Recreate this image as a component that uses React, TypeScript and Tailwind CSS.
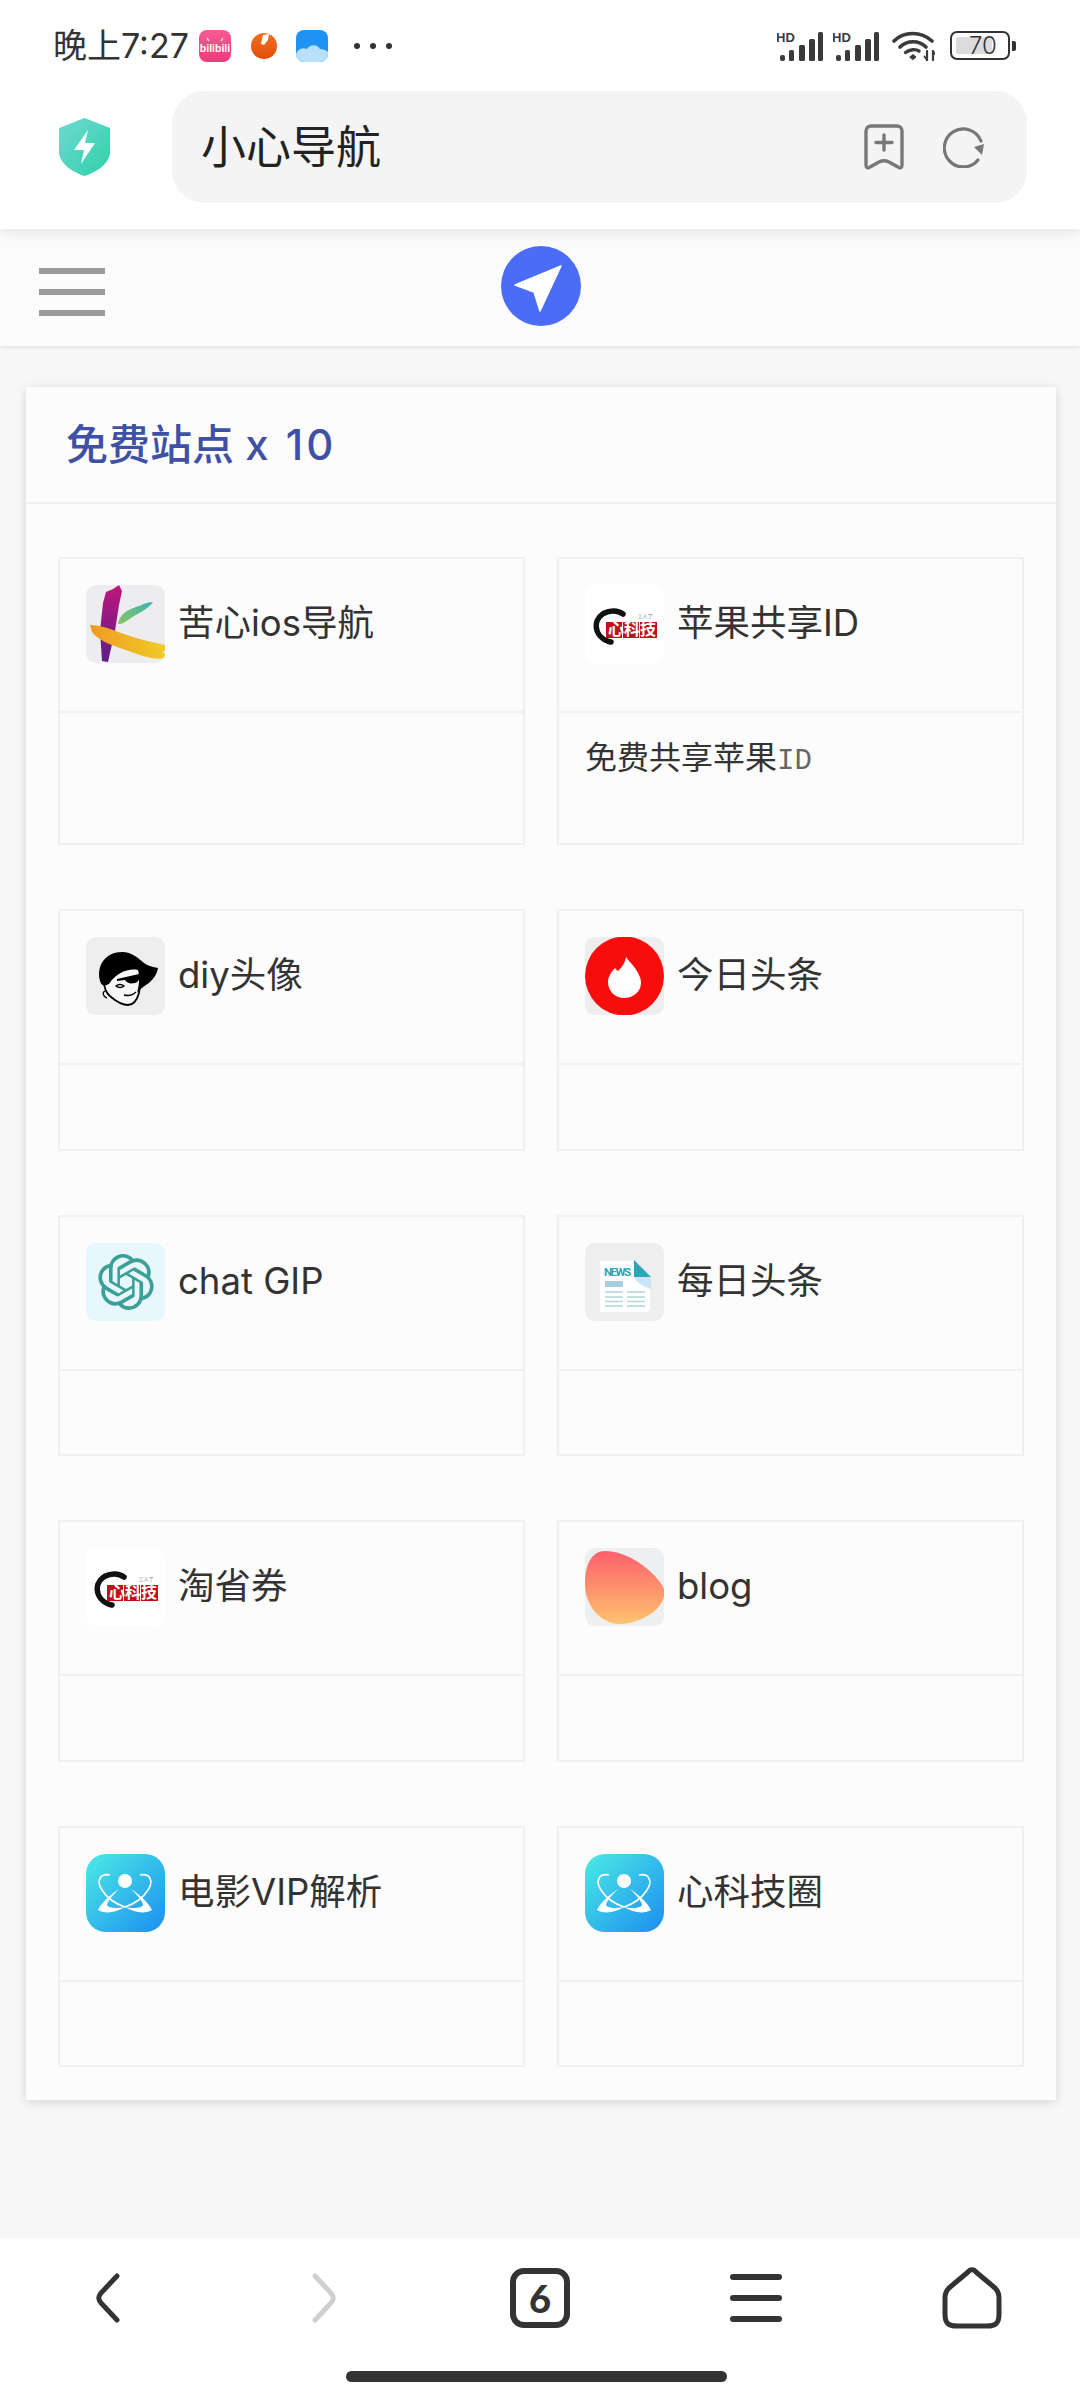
import React from 'react';
import { SiOpenai } from 'react-icons/si';

const SignalIcon = () => (
  <svg width="46" height="30" viewBox="0 0 46 30">
    <text x="-1" y="11" fontFamily="Liberation Sans" fontWeight="700" fontSize="13" fill="#3a3a3a">HD</text>
    <rect x="3" y="24" width="5" height="6" rx="2" fill="#3a3a3a" />
    <rect x="12" y="19" width="5" height="11" rx="1.5" fill="#3a3a3a" />
    <rect x="22" y="14" width="6" height="16" rx="1.5" fill="#3a3a3a" />
    <rect x="32" y="8" width="6" height="22" rx="1.5" fill="#3a3a3a" />
    <rect x="41" y="1" width="5" height="29" rx="1.5" fill="#3a3a3a" />
  </svg>
);

const WifiIcon = () => (
  <svg width="43" height="31" viewBox="0 0 43 31" fill="none" stroke="#3a3a3a" strokeLinecap="round">
    <path d="M2 11C12 1 29 1 40 11" strokeWidth="3.6" />
    <path d="M8 17C15 10 27 10 34 17" strokeWidth="3.6" />
    <path d="M13.5 22.5C18 19 24 19 27 21" strokeWidth="3.4" />
    <path d="M18 27l3-2.5 3 2.5-3 2.5z" fill="#3a3a3a" strokeWidth="1" />
    <path d="M35 21v9M41 21v9" strokeWidth="2.2" />
    <path d="M32.5 26.5L35 30M43 24l-2-3" strokeWidth="1.8" />
  </svg>
);

const Battery = () => (
  <div className="flex items-center gap-[2px]">
    <div className="relative flex h-[29px] w-[60px] items-center justify-center rounded-[7px] border-[2.5px] border-[#333333] p-[3px]">
      <div className="absolute top-[4px] bottom-[4px] left-[4px] w-[36px] rounded-[2px] bg-[#dcdcdc]" />
      <span className="relative pl-[6px] text-[24px] leading-none font-light text-[#333333]">70</span>
    </div>
    <div className="h-[10px] w-[4px] rounded-r-[2px] bg-[#333333]" />
  </div>
);

const BiliIcon = () => (
  <svg width="32" height="32" viewBox="0 0 32 32">
    <defs>
      <linearGradient id="bili" x1="0" y1="0" x2="0" y2="1">
        <stop offset="0" stopColor="#f65c92" />
        <stop offset="1" stopColor="#f0397c" />
      </linearGradient>
    </defs>
    <rect width="32" height="32" rx="8" fill="url(#bili)" />
    <path d="M8 8l2 3M24 8l-2 3" stroke="#fbc3d8" strokeWidth="1.5" />
    <text x="16" y="22" textAnchor="middle" fontFamily="Liberation Sans" fontWeight="700" fontSize="10.500" fill="#fff">bilibili</text>
  </svg>
);

const PenIcon = () => (
  <svg width="26" height="26" viewBox="0 0 26 26">
    <defs>
      <linearGradient id="pen" x1="0" y1="0" x2="0" y2="1">
        <stop offset="0" stopColor="#f07020" />
        <stop offset="1" stopColor="#e24c0a" />
      </linearGradient>
    </defs>
    <circle cx="13" cy="13" r="13" fill="url(#pen)" />
    <path d="M12 2l6-1-1 6-4 5-3-1z" fill="#fff" />
  </svg>
);

const CloudIcon = () => (
  <svg width="32" height="32" viewBox="0 0 32 32">
    <rect width="32" height="32" rx="8" fill="#1f93f5" />
    <path d="M0 24c2-5 6-7 11-5 3-5 10-5 13 0 3 0 6 1 8 3v2a8 8 0 0 1-8 8H8a8 8 0 0 1-8-8z" fill="#b9e0fb" />
  </svg>
);

const ShieldIcon = () => (
  <svg width="51" height="58" viewBox="0 0 51 58">
    <defs>
      <linearGradient id="shield" x1="0" y1="0" x2="1" y2="1">
        <stop offset="0" stopColor="#6fd9d4" />
        <stop offset="1" stopColor="#2fd0a6" />
      </linearGradient>
    </defs>
    <path d="M25.5 0L51 10v24c0 11-13 20-25.500 24C13 54 0 45 0 34V10z" fill="url(#shield)" />
    <path d="M29 12L15 32h10l-3 14 14-21H26z" fill="#fff" />
  </svg>
);

const BookmarkIcon = () => (
  <svg width="40" height="46" viewBox="0 0 40 46" fill="none" stroke="#777777" strokeWidth="3.4" strokeLinecap="round" strokeLinejoin="round">
    <path d="M7 2h26a5 5 0 0 1 5 5v34c0 3-2 3.500-4 2l-9-5c-3-1.500-7-1.500-10 0l-9 5c-2 1.500-4 1-4-2V7a5 5 0 0 1 5-5z" />
    <path d="M20 11v15M12 18.500h16" />
  </svg>
);

const ReloadIcon = () => (
  <svg width="42" height="42" viewBox="0 0 42 42" fill="none">
    <path d="M38 15A19 19 0 1 0 35 34" stroke="#777777" strokeWidth="3.2" strokeLinecap="round" />
    <path d="M41 18L39 29 31 21z" fill="#777777" />
  </svg>
);

const SendIcon = () => (
  <svg width="80" height="80" viewBox="0 0 80 80">
    <circle cx="40" cy="40" r="40" fill="#4a6cf7" />
    <path d="M60 20L14 39l19 7 6 19z" fill="#fff" stroke="#fff" strokeWidth="1.500" strokeLinejoin="round" />
  </svg>
);

const KIcon = () => (
  <svg width="79" height="78" viewBox="0 0 79 78">
    <defs>
      <linearGradient id="kv" x1="0" y1="0" x2="0" y2="1">
        <stop offset="0" stopColor="#c0167a" />
        <stop offset="1" stopColor="#5b1e8c" />
      </linearGradient>
      <linearGradient id="kg" x1="0" y1="1" x2="1" y2="0">
        <stop offset="0" stopColor="#8cc660" />
        <stop offset="1" stopColor="#38b5b0" />
      </linearGradient>
      <linearGradient id="ky" x1="0" y1="0" x2="1" y2="0">
        <stop offset="0" stopColor="#ef9a22" />
        <stop offset="1" stopColor="#f0cb28" />
      </linearGradient>
    </defs>
    <rect width="79" height="78" rx="9" fill="#ededf0" />
    <path d="M33 0l3 6-3 14-4 26-7 31-6-1-2-30 3-28 3-11 7-3z" fill="url(#kv)" />
    <path d="M32 39c1-9 9-14 18-17 6-2 11-5 17-5-4 6-12 10-19 14-5 3-11 9-16 8z" fill="url(#kg)" />
    <path d="M4 40c10 0 21 4 31 8 13 5 30 9 44 12v6l-3 1 3 2v4c-9 2-20-1-31-5C33 62 14 58 6 47z" fill="url(#ky)" />
  </svg>
);

const XinkejiIcon = () => (
  <svg width="79" height="78" viewBox="0 0 79 78" className="bg-[#ffffff]">
    <path d="M38 29C30 23 16 26 12 36c-3 9 3 19 14 21" fill="none" stroke="#111111" strokeWidth="5.500" strokeLinecap="round" strokeDasharray="20 1.500 14 1" />
    <rect x="21" y="37" width="16" height="16" fill="#c2101a" />
    <rect x="38" y="37" width="16" height="16" fill="#c2101a" />
    <rect x="55" y="37" width="17" height="16" fill="#c2101a" />
    <text x="47" y="50" textAnchor="middle" fontFamily="Noto Sans CJK SC" fontWeight="700" fontSize="16" fill="#ffffff">心科技</text>
    <text x="60" y="33" textAnchor="middle" fontFamily="Noto Sans CJK SC" fontSize="5" fill="#777777">工人了</text>
  </svg>
);

const AvatarIcon = () => (
  <svg width="79" height="78" viewBox="0 0 79 78">
    <rect width="79" height="78" rx="9" fill="#eeeeee" />
    <path d="M18 44c0 8 3 13 7 16 6 5 12 8 17 8 6 0 9-5 11-12l2-14V30H25z" fill="#f8f8f8" stroke="#000" strokeWidth="1.800" />
    <path d="M14 44C10 28 20 15 36 15c10 0 16 6 22 11 4 3 9 4 14 5-1 7-6 13-12 17-4 3-7 5-9 8 2-7 3-16 1-23-10-2-22 3-29 14-4 2-7 3-9-3z" fill="#000" />
    <path d="M31 42l22-5c1 4 0 8-4 9-5 1-8 0-10-3l-8 1z" fill="#000" />
    <path d="M30 49c2-2 6-2 8 0-2 2-6 2-8 0zM38 58c4 1 9 0 12-3M19 54c-3 1-2 6 2 7" fill="none" stroke="#000" strokeWidth="1.300" />
  </svg>
);

const FlameIcon = () => (
  <svg width="79" height="78" viewBox="0 0 79 78">
    <rect width="79" height="78" rx="9" fill="#eeeeee" />
    <circle cx="39.500" cy="39" r="39.500" fill="#f80d0d" />
    <path d="M41 20c-1 6-4 10-8 14-2-1-2-2-3-3-4 4-7 9-7 14 0 9 7 16 16 16 10 0 17-7 17-15 0-6-3-10-6-15-3-4-7-8-9-11z" fill="#fff" />
  </svg>
);

const GptIcon = () => (
  <div className="flex h-[78px] w-[79px] items-center justify-center rounded-[9px] bg-[#e8f7fd]">
    <SiOpenai className="h-[56px] w-[56px] text-[#3b9f97]" />
  </div>
);

const NewsIcon = () => (
  <svg width="79" height="78" viewBox="0 0 79 78">
    <rect width="79" height="78" rx="9" fill="#eeeeee" />
    <path d="M15 18h33l17 17v30a4 4 0 0 1-4 4H15z" fill="#ffffff" />
    <path d="M49 17l17 17H49z" fill="#2aa7b8" />
    <path d="M49 34h17v12c-7-2-14-6-17-12z" fill="#c8e6f7" />
    <text x="19" y="33" fontFamily="Roboto" fontWeight="700" fontSize="11.500" fill="#2aa7b8" textLength="27">NEWS</text>
    <rect x="20" y="38" width="18" height="6" fill="#a6cde0" />
    <path d="M20 49h18M42 49h18M20 54h18M42 54h18M20 58.500h18M42 58.500h18M20 63h18M42 63h18" stroke="#b3d4d8" strokeWidth="1.300" />
  </svg>
);

const BlobIcon = () => (
  <svg width="79" height="78" viewBox="0 0 79 78">
    <defs>
      <linearGradient id="blob" x1="0" y1="0" x2="0" y2="1">
        <stop offset="0" stopColor="#fd5f6c" />
        <stop offset="1" stopColor="#fec36f" />
      </linearGradient>
    </defs>
    <rect width="79" height="78" rx="9" fill="#eeeff1" />
    <path d="M20 3c17 0 35 10 49 24 7 8 12 13 10 21-2 14-24 28-44 28C16 76 0 58 0 36 0 16 7 3 20 3z" fill="url(#blob)" />
  </svg>
);

const AtomIcon = ({ id }: { id: string }) => {
  const orbit = (
    <>
      <path d="M12 56C16 48 24 41 33 35 26 42 21 48 21 51 22 54 30 55 39 53 30 59 18 60 12 56z" fill="#fff" />
      <path d="M24 21C14 19 10 27 16 36 21 44 30 50 39 53" fill="none" stroke="#fff" strokeWidth="1.600" />
    </>
  );
  return (
    <svg width="79" height="78" viewBox="0 0 79 78">
      <defs>
        <linearGradient id={id} x1="0" y1="0" x2="1" y2="1">
          <stop offset="0" stopColor="#4beae4" />
          <stop offset="1" stopColor="#1c8ff0" />
        </linearGradient>
      </defs>
      <rect width="79" height="78" rx="20" fill={`url(#${id})`} />
      <circle cx="39" cy="27" r="7" fill="#fff" />
      {orbit}
      <g transform="translate(78 0) scale(-1 1)">{orbit}</g>
    </svg>
  );
};

interface Site {
  name: string;
  desc?: string;
  icon: React.ReactNode;
}

const sites: Site[] = [
  { name: '苦心ios导航', icon: <KIcon /> },
  { name: '苹果共享ID', desc: '免费共享苹果', icon: <XinkejiIcon /> },
  { name: 'diy头像', icon: <AvatarIcon /> },
  { name: '今日头条', icon: <FlameIcon /> },
  { name: 'chat GIP', icon: <GptIcon /> },
  { name: '每日头条', icon: <NewsIcon /> },
  { name: '淘省券', icon: <XinkejiIcon /> },
  { name: 'blog', icon: <BlobIcon /> },
  { name: '电影VIP解析', icon: <AtomIcon id="atom1" /> },
  { name: '心科技圈', icon: <AtomIcon id="atom2" /> },
];

const SiteCard = ({ site }: { site: Site }) => (
  <div className="flex flex-col border-2 border-[#f0f0f0]">
    <div className="flex h-[154px] items-start gap-[13px] border-b-2 border-[#f0f0f0] pt-[26px] pl-[26px]">
      <div className="h-[78px] w-[79px] shrink-0 overflow-hidden rounded-[9px]">{site.icon}</div>
      <span className="text-[36.5px] leading-[76px] text-[#333333]">{site.name}</span>
    </div>
    <div className="min-h-[83.5px] flex-1 pl-[26px]">
      {site.desc && (
        <p className="h-[130px] pt-[26px] text-[32px] leading-[38px] text-[#333333]">
          {site.desc}
          <span className="font-['Liberation_Mono',monospace] text-[29px] leading-none font-light text-[#666666]">ID</span>
        </p>
      )}
    </div>
  </div>
);

export default function App() {
  return (
    <div className="flex min-h-[2400px] flex-col bg-[#f7f7f7] font-['Inter','Noto_Sans_CJK_SC',sans-serif]">
      <div className="relative z-10 h-[229px] bg-white shadow-[0_3px_12px_rgba(0,0,0,0.1)]">
        <div className="flex h-[91px] items-center pr-[64px] pl-[53px]">
          <span className="text-[34px] leading-none text-[#333333]">晚上7:27</span>
          <div className="ml-[10px] flex items-center">
            <BiliIcon />
            <div className="ml-[20px]"><PenIcon /></div>
            <div className="ml-[19px]"><CloudIcon /></div>
            <div className="ml-[26px] flex gap-[10px]">
              <span className="h-[6px] w-[6px] rounded-full bg-[#333333]" />
              <span className="h-[6px] w-[6px] rounded-full bg-[#333333]" />
              <span className="h-[6px] w-[6px] rounded-full bg-[#333333]" />
            </div>
          </div>
          <div className="ml-auto flex items-center">
            <SignalIcon />
            <div className="ml-[10px]"><SignalIcon /></div>
            <div className="ml-[13px]"><WifiIcon /></div>
            <div className="ml-[15px]"><Battery /></div>
          </div>
        </div>
        <div className="flex items-center pl-[59px]">
          <ShieldIcon />
          <div className="ml-[62px] flex h-[112px] w-[855px] items-center rounded-[32px] bg-[#f4f4f4] pr-[42px] pl-[29px]">
            <span className="text-[45px] leading-none text-[#222222]">小心导航</span>
            <div className="ml-auto flex items-center gap-[39px]">
              <BookmarkIcon />
              <ReloadIcon />
            </div>
          </div>
        </div>
      </div>

      <div className="flex h-[117px] items-start bg-[#fbfbfb] pl-[39px] shadow-[0_2px_4px_rgba(0,0,0,0.08)]">
        <div className="mt-[39px] flex w-[66px] flex-col gap-[15px]">
          <span className="h-[6px] bg-[#9b9b9b]" />
          <span className="h-[6px] bg-[#9b9b9b]" />
          <span className="h-[6px] bg-[#9b9b9b]" />
        </div>
        <div className="mt-[17px] ml-[396px]"><SendIcon /></div>
      </div>

      <main className="flex-1 pt-[41px] pl-[26px]">
        <div className="w-[1030px] bg-[#fcfcfc] pb-[33px] shadow-[0_2px_10px_rgba(0,0,0,0.14)]">
          <div className="flex h-[117px] items-center border-b-2 border-[#f0f0f0] pl-[40px]">
            <h2 className="text-[42px] leading-none font-medium text-[#3f51a5]">
              免费站点 <span className="tracking-[3px]">x 10</span>
            </h2>
          </div>
          <div className="grid grid-cols-2 gap-x-[32px] gap-y-[64px] px-[32px] pt-[53px]">
            {sites.map((site) => (
              <SiteCard key={site.name} site={site} />
            ))}
          </div>
        </div>
      </main>

      <nav className="h-[162px] bg-white">
        <div className="grid h-[120px] grid-cols-5 items-center justify-items-center">
          <svg width="24" height="50" viewBox="0 0 24 50" fill="none" stroke="#333333" strokeWidth="5" strokeLinecap="round">
            <path d="M21 3L5 20c-3 4-3 6 0 10l16 17" />
          </svg>
          <svg width="24" height="50" viewBox="0 0 24 50" fill="none" stroke="#cfcfcf" strokeWidth="5" strokeLinecap="round">
            <path d="M3 3l16 17c3 4 3 6 0 10L3 47" />
          </svg>
          <div className="flex h-[60px] w-[60px] items-center justify-center rounded-[14px] border-[6px] border-[#333333]">
            <span className="font-['Lato',sans-serif] text-[38px] leading-none font-black text-[#333333]">6</span>
          </div>
          <div className="flex w-[52px] flex-col gap-[15px]">
            <span className="h-[6px] rounded-full bg-[#333333]" />
            <span className="h-[6px] rounded-full bg-[#333333]" />
            <span className="h-[6px] rounded-full bg-[#333333]" />
          </div>
          <svg width="60" height="62" viewBox="0 0 60 62" fill="none" stroke="#333333" strokeWidth="5" strokeLinejoin="round">
            <path d="M26 5c2-3 6-3 8 0L53 21c3 3 4 6 4 10v16c0 9-3 12-12 12H15C6 59 3 56 3 47V31c0-4 1-7 4-10z" />
          </svg>
        </div>
        <div className="mx-auto mt-[13px] h-[11px] w-[381px] -translate-x-[4px] rounded-full bg-[#333333]" />
      </nav>
    </div>
  );
}
